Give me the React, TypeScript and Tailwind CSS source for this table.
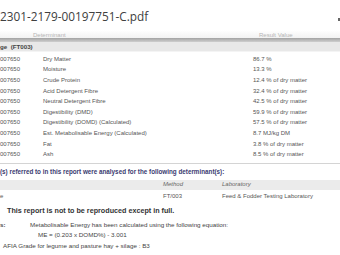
import React from "react";

const rows: [string, string][] = [
  ["Dry Matter", "86.7 %"],
  ["Moisture", "13.3 %"],
  ["Crude Protein", "12.4 % of dry matter"],
  ["Acid Detergent Fibre", "32.4 % of dry matter"],
  ["Neutral Detergent Fibre", "42.5 % of dry matter"],
  ["Digestibility (DMD)", "59.9 % of dry matter"],
  ["Digestibility (DOMD) (Calculated)", "57.5 % of dry matter"],
  ["Est. Metabolisable Energy (Calculated)", "8.7 MJ/kg DM"],
  ["Fat", "3.8 % of dry matter"],
  ["Ash", "8.5 % of dry matter"],
];

export default function App() {
  return (
    <div
      className="w-[340px] h-[255px] overflow-hidden bg-white flex flex-col"
      style={{ fontFamily: '"Liberation Sans", Arial, sans-serif' }}
    >
      {/* title */}
      <div className="h-[30px] flex items-start justify-between pt-[6px]">
        <div
          className="text-[11.8px] leading-[20px] text-[#404040] whitespace-nowrap"
          style={{ fontFamily: '"Open Sans", sans-serif' }}
        >
          2301-2179-00197751-C.pdf
        </div>
        <div className="w-[2px] h-[3px] bg-[#666] mt-[12px]" />
      </div>

      {/* table header */}
      <div className="h-[8px] flex items-end text-[6px] leading-[6px] text-[#b5b5b5] bg-gradient-to-b from-white to-[#f2f2f2]">
        <div className="w-[33px]" />
        <div className="w-[226px]">Determinant</div>
        <div>Result Value</div>
      </div>
      <div className="h-[4px] bg-gradient-to-b from-[#a2a2a2] to-[#cfcfcf]" />

      {/* group row */}
      <div className="h-[10px] bg-[#e8e8e8] border-b border-[#f4f4f4] flex items-center text-[6.2px] font-bold text-[#444] whitespace-nowrap">
        ge&nbsp;&nbsp;(FT003)
      </div>

      {/* data rows */}
      <div className="flex flex-col pt-[2px] text-[6px] text-[#555]">
        {rows.map(([name, value]) => (
          <div key={name} className="h-[10.6px] flex items-center whitespace-nowrap">
            <div className="w-[43px] shrink-0">007650</div>
            <div className="w-[210px] shrink-0">{name}</div>
            <div>{value}</div>
          </div>
        ))}
      </div>
      <div className="h-[1px] bg-[#d4d4d4] mt-[3px]" />

      {/* analysed note */}
      <div className="h-[16px] flex items-center text-[6.3px] font-bold text-[#3a3a70] whitespace-nowrap">
        (s) referred to in this report were analysed for the following determinant(s):
      </div>

      {/* method table */}
      <div className="h-[10px] bg-[#ebebeb] flex items-center text-[6px] italic text-[#666] whitespace-nowrap">
        <div className="w-[163px] shrink-0" />
        <div className="w-[59px] shrink-0">Method</div>
        <div>Laboratory</div>
      </div>
      <div className="h-[14px] flex items-center text-[6px] text-[#555] whitespace-nowrap">
        <div className="w-[163px] shrink-0">e</div>
        <div className="w-[59px] shrink-0">FT/003</div>
        <div>Feed &amp; Fodder Testing Laboratory</div>
      </div>

      {/* reproduce note */}
      <div className="h-[15px] flex items-center pl-[7px] text-[7.2px] font-bold text-[#333] whitespace-nowrap">
        This report is not to be reproduced except in full.
      </div>

      {/* notes */}
      <div className="flex flex-col text-[6.25px] text-[#444] whitespace-nowrap">
        <div className="h-[11px] flex items-center">
          <div className="w-[30px] shrink-0 font-bold">s:</div>
          <div>Metabolisable Energy has been calculated using the following equation:</div>
        </div>
        <div className="h-[10px] flex items-center pl-[38px]">ME = (0.203 x DOMD%) - 3.001</div>
        <div className="h-[12px] flex items-center pl-[3px]">
          AFIA Grade for legume and pasture hay + silage : B3
        </div>
      </div>
    </div>
  );
}
